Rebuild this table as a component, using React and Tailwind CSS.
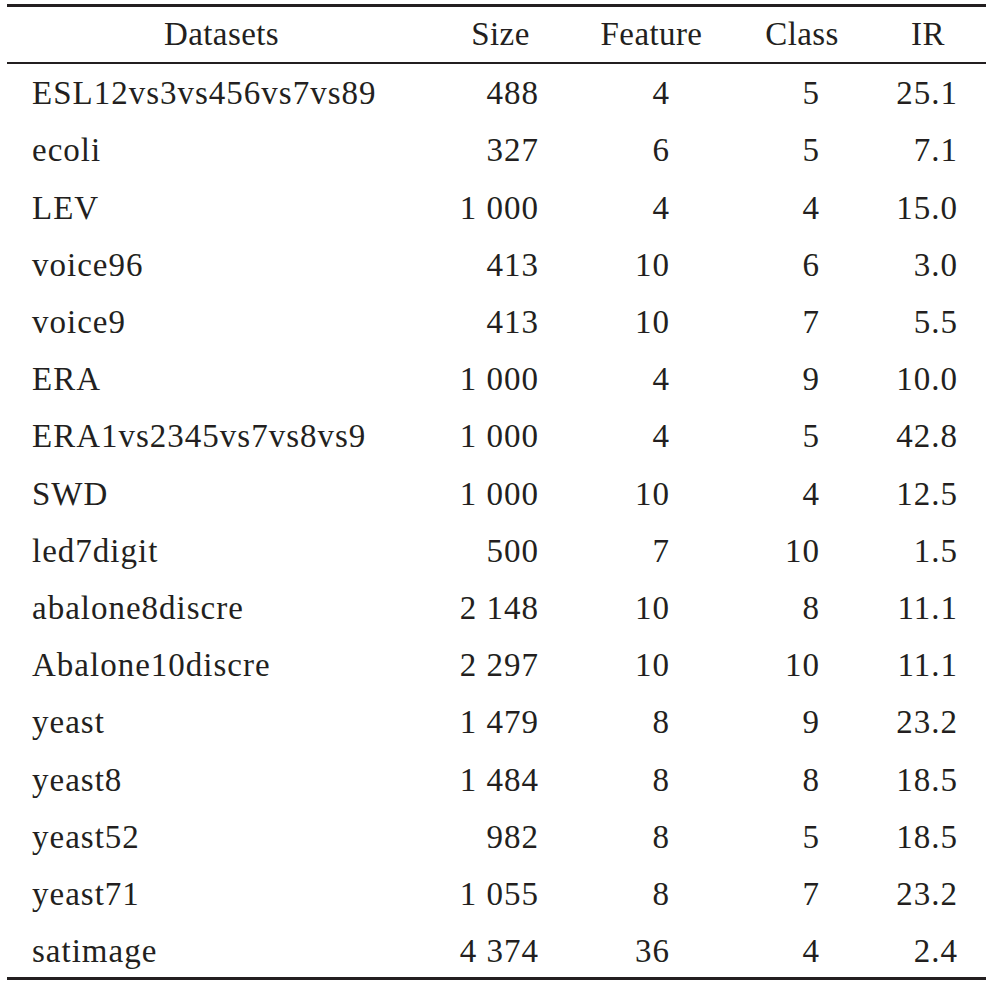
import React from 'react';

const rows = [
  ['ESL12vs3vs456vs7vs89', '488', '4', '5', '25.1'],
  ['ecoli', '327', '6', '5', '7.1'],
  ['LEV', '1 000', '4', '4', '15.0'],
  ['voice96', '413', '10', '6', '3.0'],
  ['voice9', '413', '10', '7', '5.5'],
  ['ERA', '1 000', '4', '9', '10.0'],
  ['ERA1vs2345vs7vs8vs9', '1 000', '4', '5', '42.8'],
  ['SWD', '1 000', '10', '4', '12.5'],
  ['led7digit', '500', '7', '10', '1.5'],
  ['abalone8discre', '2 148', '10', '8', '11.1'],
  ['Abalone10discre', '2 297', '10', '10', '11.1'],
  ['yeast', '1 479', '8', '9', '23.2'],
  ['yeast8', '1 484', '8', '8', '18.5'],
  ['yeast52', '982', '8', '5', '18.5'],
  ['yeast71', '1 055', '8', '7', '23.2'],
  ['satimage', '4 374', '36', '4', '2.4'],
];

const cols = 'grid grid-cols-[428px_131px_171px_130px_119px]';

export default function App() {
  return (
    <div className="w-[990px] h-[988px] bg-white pt-[4px] pl-[7px] text-[#231f20] font-['Liberation_Serif'] text-[33px]">
      <div className="w-[979px] border-t-[3px] border-[#231f20]">
        {/* header */}
        <div className={`${cols} h-[57px] leading-[55px] border-b-[2px] border-[#231f20] text-center whitespace-nowrap tracking-[0.4px]`}>
          <div className="pl-[1px]">Datasets</div>
          <div>Size</div>
          <div>Feature</div>
          <div>Class</div>
          <div className="pl-[3px]">IR</div>
        </div>

        {/* body */}
        <div className="pt-[1.25px] border-b-[3px] border-[#231f20] tracking-[1px]">
          {rows.map((r, i) => (
            <div
              key={i}
              className={`${cols} whitespace-nowrap ${i === rows.length - 1 ? 'h-[54px] leading-[57.2px]' : 'h-[57.2px] leading-[57.2px]'}`}
            >
              <div className="pl-[25px]">{r[0]}</div>
              <div className="text-right pr-[27px]">{r[1]}</div>
              <div className="text-right pr-[67px]">{r[2]}</div>
              <div className="text-right pr-[47px]">{r[3]}</div>
              <div className="text-right pr-[28px]">{r[4]}</div>
            </div>
          ))}
        </div>
      </div>
    </div>
  );
}
